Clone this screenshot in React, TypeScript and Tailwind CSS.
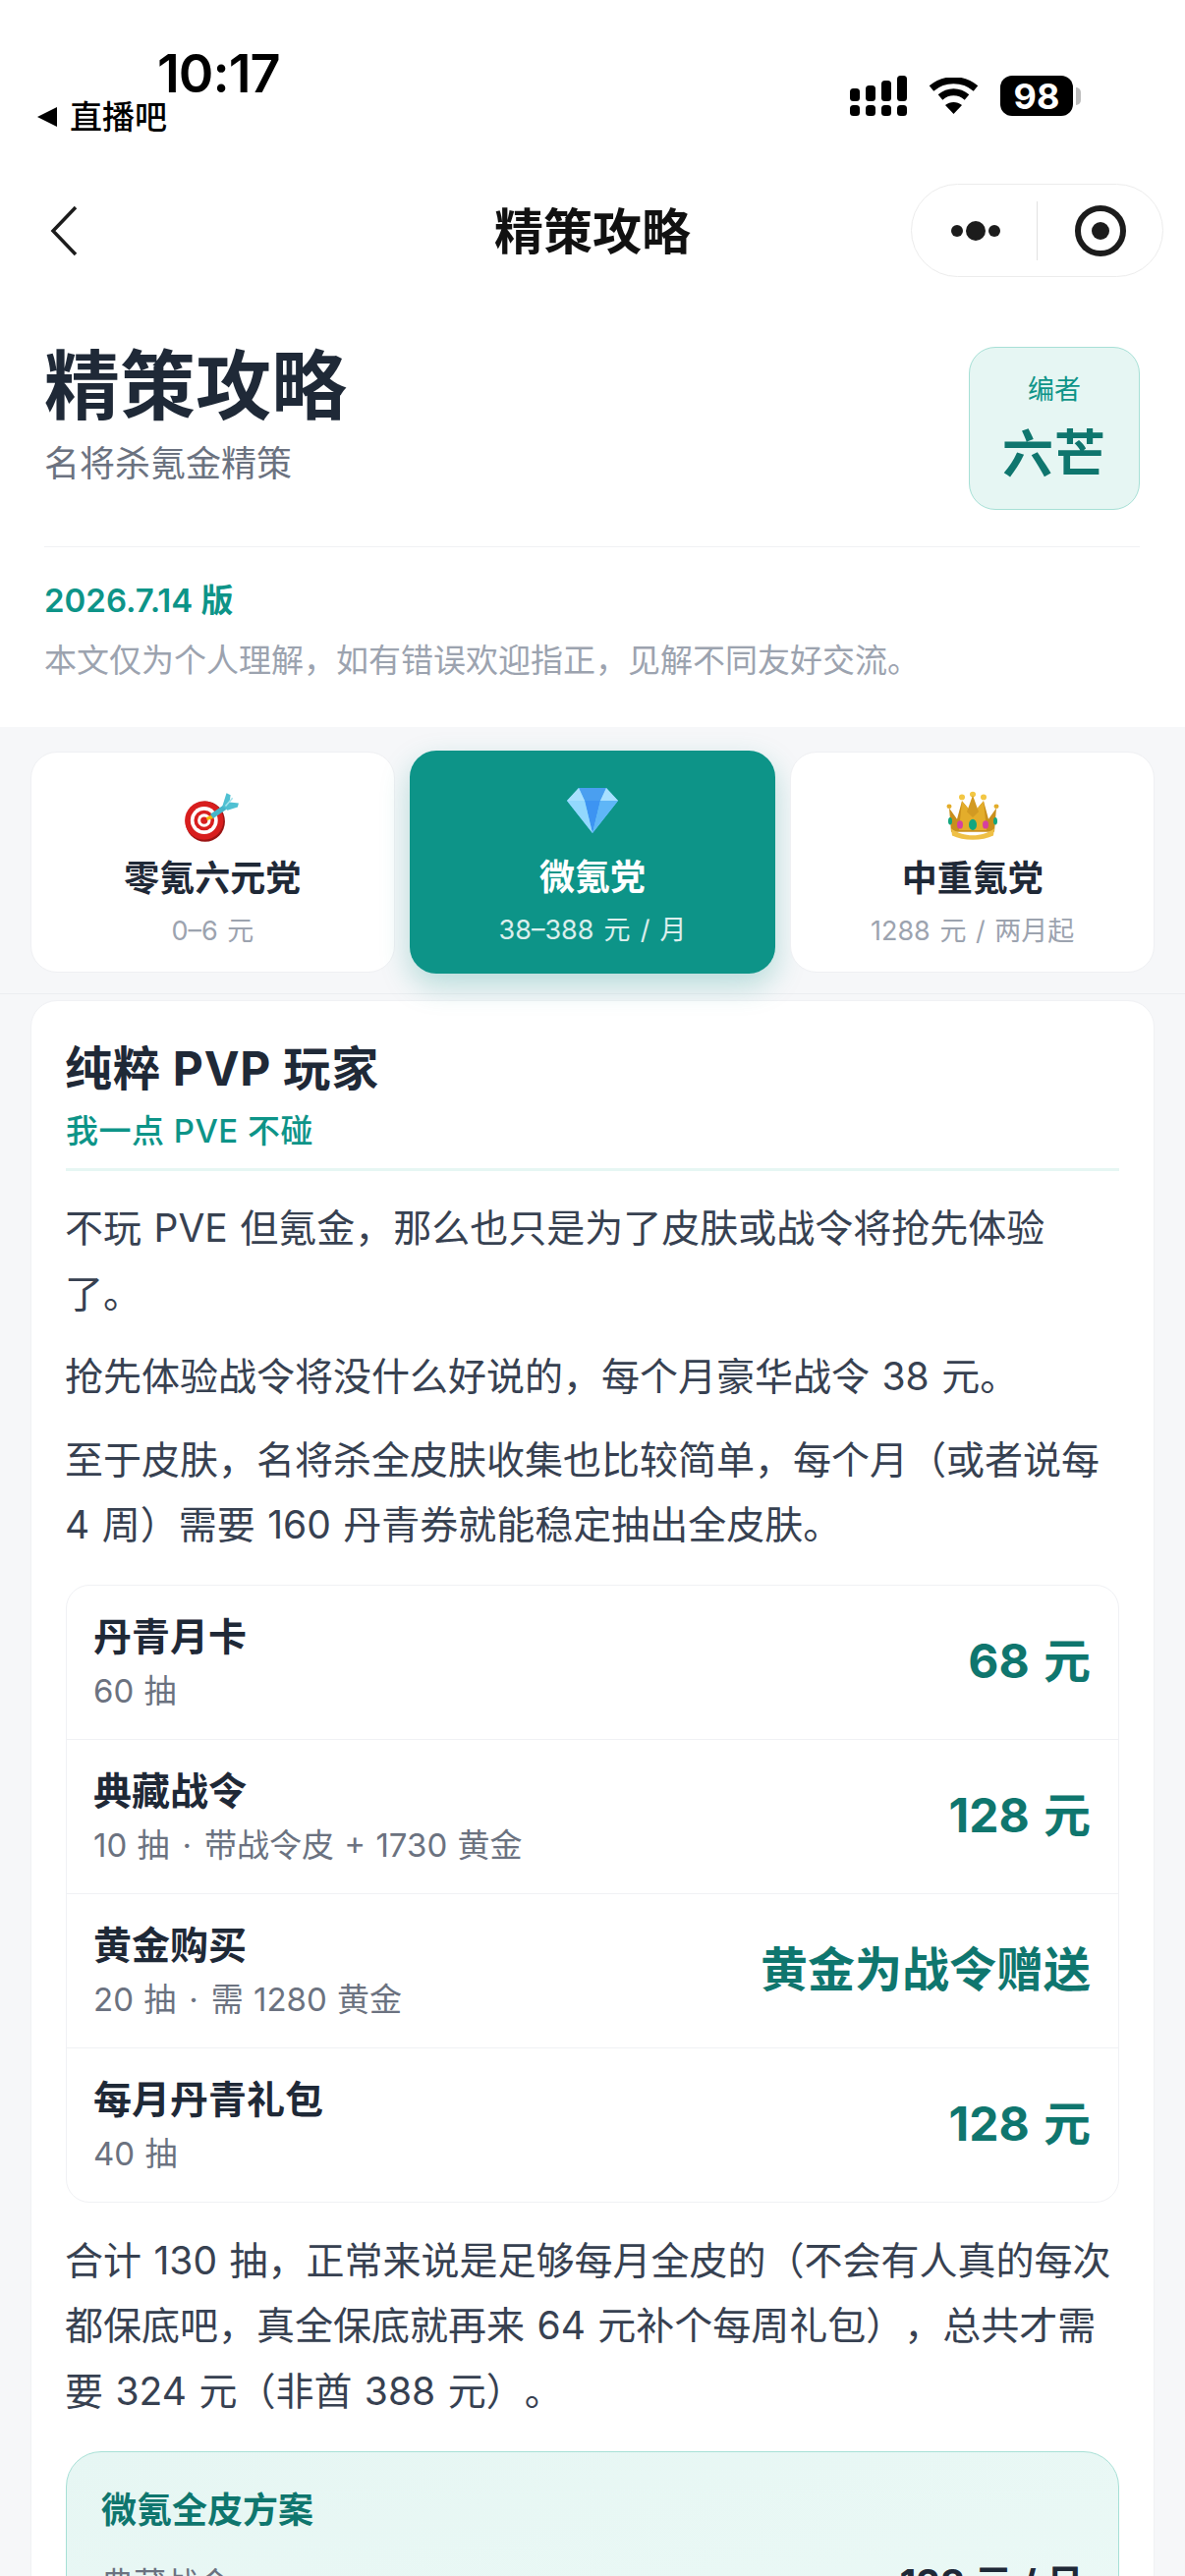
const tabs = [
  { key: "zero", icon: <DartIcon />, label: "零氪六元党", price: "0–6 元" },
  { key: "micro", icon: <GemIcon />, label: "微氪党", price: "38–388 元 / 月", active: true },
  { key: "heavy", icon: <CrownIcon />, label: "中重氪党", price: "1288 元 / 两月起" },
];

const rows = [
  { name: "丹青月卡", note: ["60 抽"], price: "68 元" },
  { name: "典藏战令", note: ["10 抽", "带战令皮 + 1730 黄金"], price: "128 元" },
  { name: "黄金购买", note: ["20 抽", "需 1280 黄金"], price: "黄金为战令赠送" },
  { name: "每月丹青礼包", note: ["40 抽"], price: "128 元" },
];

function DartIcon() {
  return (
    <svg width="62" height="62" viewBox="1 4 60 60" className="-ml-[3px] overflow-visible">
      <ellipse cx="25" cy="36" rx="19.5" ry="20" fill="#9b1414" />
      <circle cx="24" cy="35" r="19" fill="#d81e1e" />
      <circle cx="24" cy="35" r="13.5" fill="#fff" />
      <circle cx="24" cy="35" r="10" fill="#d81e1e" />
      <circle cx="24" cy="35" r="6.5" fill="#fff" />
      <circle cx="24" cy="35" r="3.5" fill="#d81e1e" />
      <path d="M26 32 L31 30 L33 33 L27 35 Z" fill="#f2b705" />
      <path d="M30 29 L43 20 L46 24 L33 33 Z" fill="#45b5c9" />
      <path d="M42 21 L46 8 L50 10 L49 17 L58 18 L57 22 L47 25 Z" fill="#4fc0d2" />
      <path d="M45 21 L52 13" stroke="#a3e3ec" strokeWidth="1.5" />
    </svg>
  );
}

function GemIcon() {
  return (
    <svg width="60" height="60" viewBox="0 8 60 60" className="overflow-visible">
      <path d="M16 8 L44 8 L56 21 L30 54 L4 21 Z" fill="#6cc4fb" />
      <path d="M16 8 L44 8 L38 21 L22 21 Z" fill="#4a9ff0" />
      <path d="M16 8 L22 21 L4 21 Z" fill="#a8e0ff" />
      <path d="M44 8 L38 21 L56 21 Z" fill="#a8e0ff" />
      <path d="M22 21 L38 21 L30 54 Z" fill="#3d94f2" />
      <path d="M4 21 L22 21 L30 54 Z" fill="#93d8fd" />
      <path d="M38 21 L56 21 L30 54 Z" fill="#5fb6f7" />
    </svg>
  );
}

function CrownIcon() {
  return (
    <svg width="60" height="56" viewBox="0 3 60 60" preserveAspectRatio="none" className="overflow-visible">
      <path d="M6 24 L14 36 L19 16 L30 30 L41 16 L46 36 L54 24 L52 50 L8 50 Z" fill="#c98f1c" />
      <path d="M19 16 L30 30 L41 16 L44 48 L16 48 Z" fill="#e3ad2b" />
      <path d="M8 46 C20 56 40 56 52 46 L51 54 C40 60 20 60 9 54 Z" fill="#efc046" />
      <circle cx="6" cy="22" r="2.5" fill="#e3ad2b" />
      <circle cx="54" cy="22" r="2.5" fill="#e3ad2b" />
      <circle cx="19" cy="12" r="3" fill="#f3c744" />
      <circle cx="41" cy="12" r="3" fill="#f3c744" />
      <circle cx="30" cy="9" r="3" fill="#f3c744" />
      <path d="M30 10 L36 28 L30 34 L24 28 Z" fill="#d29a22" />
      <ellipse cx="30" cy="42" rx="4" ry="6" fill="#12a67f" />
      <ellipse cx="17" cy="42" rx="3" ry="4.5" fill="#d6409f" />
      <ellipse cx="43" cy="42" rx="3" ry="4.5" fill="#d6409f" />
      <ellipse cx="7" cy="38" rx="2" ry="4" fill="#12a67f" />
      <ellipse cx="53" cy="38" rx="2" ry="4" fill="#12a67f" />
    </svg>
  );
}

function StatusBar() {
  return (
    <div className="flex h-[165px] justify-between pt-[46px] text-black">
      <div>
        <div className="ml-[160px] text-[54px] leading-[58px] font-semibold tracking-[-1px]">10:17</div>
        <div className="ml-[38px] flex h-[30px] items-center">
          <span className="h-0 w-0 border-y-[10px] border-r-[20px] border-y-transparent border-r-black" />
          <span className="ml-[13px] text-[33px] leading-[30px] font-medium">直播吧</span>
        </div>
      </div>
      <div className="mt-[31px] mr-[106px] flex h-[41px] items-center">
        <svg width="58" height="41" viewBox="0 0 58 41" fill="#000">
          <rect x="0" y="30" width="10" height="11" rx="3.5" />
          <rect x="16" y="30" width="10" height="11" rx="3.5" />
          <rect x="32" y="30" width="10" height="11" rx="3.5" />
          <rect x="48" y="30" width="10" height="11" rx="3.5" />
          <rect x="0" y="13" width="10" height="13" rx="3.5" />
          <rect x="16" y="10" width="10" height="16" rx="3.5" />
          <rect x="32" y="5" width="10" height="21" rx="3.5" />
          <rect x="48" y="0" width="10" height="26" rx="3.5" />
        </svg>
        <svg className="ml-[22px]" width="51" height="37" viewBox="0 0 51 37" fill="none">
          <path d="M3 11 C16 0 35 0 48 11" stroke="#000" strokeWidth="7" />
          <path d="M12 20 C20 13 31 13 39 20" stroke="#000" strokeWidth="7" />
          <path d="M25.5 37 L17 28 C22 24 29 24 34 28 Z" fill="#000" />
        </svg>
        <div className="ml-[22px] flex h-[41px] w-[74px] items-center justify-center rounded-[12px] bg-black text-[36px] leading-none font-bold text-white">
          98
        </div>
        <span className="ml-[3px] h-[18px] w-[5px] rounded-r-full bg-[#bdbdbd]" />
      </div>
    </div>
  );
}

function NavBar() {
  return (
    <div className="mt-[22px] grid grid-cols-[1fr_auto_1fr] items-center px-[22px]">
      <svg className="ml-[28px]" width="30" height="52" viewBox="0 0 30 52" fill="none">
        <path d="M27 2 L4 26 L27 50" stroke="#1c1c1c" strokeWidth="3.5" />
      </svg>
      <div className="pt-[2px] text-[50px] leading-[60px] font-semibold text-[#111]">精策攻略</div>
      <div className="flex justify-end">
        <div className="flex h-[95px] w-[257px] items-center rounded-full border border-[#ececec] bg-white">
          <div className="flex h-[60px] w-[128px] items-center justify-center gap-[3px] border-r border-[#e2e2e2] pl-[2px]">
            <span className="h-[12px] w-[12px] rounded-full bg-[#1c1c1c]" />
            <span className="h-[20px] w-[20px] rounded-full bg-[#1c1c1c]" />
            <span className="h-[12px] w-[12px] rounded-full bg-[#1c1c1c]" />
          </div>
          <div className="flex flex-1 justify-center">
            <span className="flex h-[52px] w-[52px] items-center justify-center rounded-full border-[6px] border-[#1c1c1c]">
              <span className="h-[18px] w-[18px] rounded-full bg-[#1c1c1c]" />
            </span>
          </div>
        </div>
      </div>
    </div>
  );
}

function Intro() {
  return (
    <div className="mt-[68px] mr-[46px] ml-[45px]">
      <div className="flex items-start justify-between border-b border-[#f0f1f4] pb-[37px]">
        <div>
          <h1 className="pt-[1px] text-[77px] leading-[84px] font-bold text-[#1f2937]">精策攻略</h1>
          <p className="mt-[13px] text-[36px] leading-[48px] text-[#6b7280]">名将杀氪金精策</p>
        </div>
        <div className="mt-[3px] flex h-[166px] w-[174px] flex-col items-center rounded-[27px] border border-[#a7e0d6] bg-[#e6f6f3] pt-[25px]">
          <div className="text-[27px] leading-[36px] text-[#0d9488]">编者</div>
          <div className="mt-[17px] text-[52px] leading-[62px] font-bold tracking-[1px] text-[#0f766e]">六芒</div>
        </div>
      </div>
      <div className="mt-[32px] text-[33px] leading-[44px] font-semibold text-[#0d9488]">2026.7.14 版</div>
      <p className="mt-[15px] pb-[44px] text-[33px] leading-[48px] text-[#9ca3af]">
        本文仅为个人理解，如有错误欢迎指正，见解不同友好交流。
      </p>
    </div>
  );
}

function Tabs() {
  return (
    <div className="grid grid-cols-3 gap-[16px] border-b border-[#eceef1] px-[31px] pt-[25px] pb-[21px]">
      {tabs.map((t) =>
        t.active ? (
          <div
            key={t.key}
            className="-m-px flex flex-col items-center rounded-[27px] bg-[#0d9488] pt-[38px] pb-[25px] shadow-[0_12px_30px_rgba(13,148,136,0.28)]"
          >
            <div className="h-[60px]">{t.icon}</div>
            <div className="mt-[7px] text-[36px] leading-[48px] font-bold text-white">{t.label}</div>
            <div className="mt-[12px] text-[27px] leading-[36px] text-white/85 [word-spacing:2.5px]">{t.price}</div>
          </div>
        ) : (
          <div
            key={t.key}
            className="flex flex-col items-center rounded-[27px] border border-[#eff0f3] bg-white pt-[37px] pb-[23px]"
          >
            <div className="h-[60px]">{t.icon}</div>
            <div className="mt-[7px] text-[36px] leading-[48px] font-bold text-[#1f2937]">{t.label}</div>
            <div className="mt-[12px] text-[27px] leading-[36px] text-[#9ca3af] [word-spacing:2px]">{t.price}</div>
          </div>
        ),
      )}
    </div>
  );
}

function PriceTable() {
  return (
    <div className="mt-[27px] rounded-[24px] border border-[#f0f1f4] bg-white">
      {rows.map((r, i) => (
        <div
          key={r.name}
          className={
            i === 0
              ? "flex h-[156px] items-center justify-between pr-[28px] pl-[27px]"
              : "flex h-[157px] items-center justify-between border-t border-[#f0f1f4] pr-[28px] pl-[27px]"
          }
        >
          <div>
            <div className="text-[39px] leading-[52px] font-bold text-[#1f2937]">{r.name}</div>
            <div className="mt-[7px] text-[33px] leading-[44px] text-[#6b7280] [word-spacing:1px]">
              {r.note[0]}
              {r.note[1] && (
                <>
                  <span className="mx-[13px]">·</span>
                  {r.note[1]}
                </>
              )}
            </div>
          </div>
          <div className="pb-[1px] text-[48px] leading-[60px] font-bold text-[#0f766e] [word-spacing:3px]">{r.price}</div>
        </div>
      ))}
    </div>
  );
}

export default function App() {
  return (
    <div className="h-[2622px] w-[1206px] overflow-hidden bg-[#f6f7f9] font-['Inter','Noto_Sans_CJK_SC',sans-serif] [text-spacing-trim:space-all]">
      <div className="bg-white">
        <StatusBar />
        <NavBar />
        <Intro />
      </div>
      <Tabs />
      <div className="mx-[31px] mt-[6px] rounded-[27px] border border-[#f0f1f4] bg-white pt-[39px] pr-[35px] pb-[40px] pl-[35px]">
        <h2 className="-ml-px text-[48px] leading-[60px] font-bold tracking-[0.8px] text-[#1f2937]">纯粹 PVP 玩家</h2>
        <div className="mt-[11px] border-b-[3px] border-[#e6f6f3] pb-[16px] text-[33px] leading-[44px] font-medium tracking-[0.5px] text-[#0d9488]">
          我一点 PVE 不碰
        </div>
        <div className="mt-[25px] -ml-px flex flex-col gap-[18px] text-[39px] leading-[66.5px] text-[#374151] [word-spacing:1.5px]">
          <p>不玩 PVE 但氪金，那么也只是为了皮肤或战令将抢先体验了。</p>
          <p>抢先体验战令将没什么好说的，每个月豪华战令 38 元。</p>
          <p>至于皮肤，名将杀全皮肤收集也比较简单，每个月（或者说每 4 周）需要 160 丹青券就能稳定抽出全皮肤。</p>
        </div>
        <PriceTable />
        <p className="mt-[26px] -ml-px text-[39px] leading-[66.5px] text-[#374151] [word-spacing:1.5px]">
          合计 130 抽，正常来说是足够每月全皮的（不会有人真的每次都保底吧，真全保底就再来 64 元补个每周礼包），总共才需要 324 元（非酋 388 元）。
        </p>
        <div className="mt-[28px] rounded-[36px] border border-[#a7e0d6] bg-linear-to-br from-[#e6f6f3] to-[#ebf9f6] px-[35px] pt-[37px] pb-[40px]">
          <div className="text-[36px] leading-[44px] font-bold text-[#0f766e]">微氪全皮方案</div>
          <div className="mt-[31px] flex items-center justify-between">
            <span className="text-[33px] leading-[44px] text-[#6b7280]">典藏战令</span>
            <span className="text-[39px] leading-[44px] font-bold text-[#1f2937]">128 元 / 月</span>
          </div>
        </div>
      </div>
    </div>
  );
}
